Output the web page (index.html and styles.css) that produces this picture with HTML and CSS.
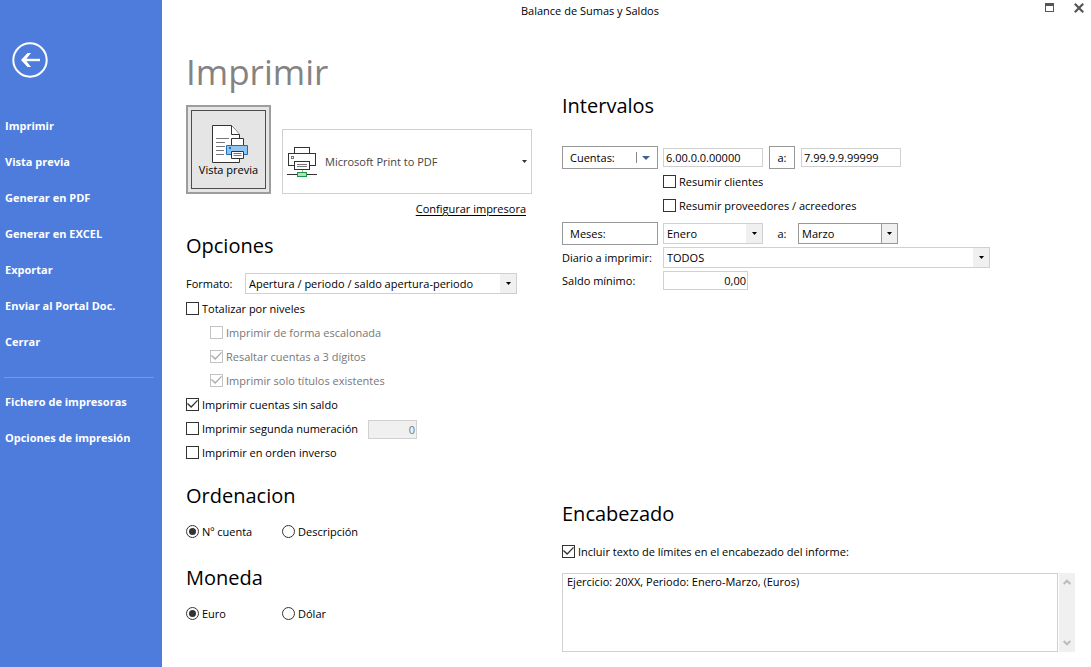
FILE: index.html
```html
<!DOCTYPE html>
<html lang="es">
<head>
<meta charset="utf-8">
<meta name="viewport" content="width=device-width, initial-scale=1">
<title>Balance de Sumas y Saldos</title>
<link rel="stylesheet" href="styles.css">
</head>
<body>
<nav class="sidebar">
  <button class="back" type="button" aria-label="Volver">
    <svg width="36" height="36" viewBox="0 0 36 36" fill="none" stroke="#fff">
      <circle cx="18" cy="18" r="16.7" stroke-width="2"/>
      <path d="M11 18h17" stroke-width="2.4"/>
      <path d="M9 18l6.5-7h3.5l-5.5 7 5.500 7h-3.500z" fill="#fff" stroke="none"/>
    </svg>
  </button>
  <ul class="menu">
    <li><a href="#">Imprimir</a></li>
    <li><a href="#">Vista previa</a></li>
    <li><a href="#">Generar en PDF</a></li>
    <li><a href="#">Generar en EXCEL</a></li>
    <li><a href="#">Exportar</a></li>
    <li><a href="#">Enviar al Portal Doc.</a></li>
    <li><a href="#">Cerrar</a></li>
  </ul>
  <hr class="divider">
  <ul class="menu">
    <li><a href="#">Fichero de impresoras</a></li>
    <li><a href="#">Opciones de impresión</a></li>
  </ul>
</nav>

<div class="window">
  <header class="titlebar">
    <span class="caption">Balance de Sumas y Saldos</span>
    <div class="controls">
      <button type="button" aria-label="Maximizar">
        <svg width="9" height="9" viewBox="0 0 9 9" shape-rendering="crispEdges"><path d="M.5.5h8v8h-8z" fill="none" stroke="#555"/><path d="M0 0h9v3H0z" fill="#555"/></svg>
      </button>
      <button type="button" aria-label="Cerrar ventana">
        <svg width="10" height="10" viewBox="0 0 10 10"><path d="M.8.8l8.400 8.400M9.200.8L.8 9.200" stroke="#555" stroke-width="2.200"/></svg>
      </button>
    </div>
  </header>

  <main class="content">
    <div class="column">
      <h1>Imprimir</h1>
      <div class="output">
        <button class="preview" type="button">
          <span class="preview-face">
            <svg width="37" height="38" viewBox="0 0 37 38" fill="#fff" stroke="#333">
              <path d="M.5.5h19l8 9v28H.5z"/>
              <path d="M19.500.5v9h8"/>
              <path d="M4 13.500h13M4 17.500h9M4 21.500h9M4 25.500h8M4 29.500h8" stroke="#777"/>
              <path d="M19.500 13.500h12v7h-12z"/>
              <path d="M14.500 20.500h21v9h-21z" fill="#92c5ee" stroke="#1c6dbb"/>
              <path d="M17 22h2v2h-2z" fill="#1c6dbb" stroke="none"/>
              <path d="M19.500 26.500h12v7h-12z"/>
              <path d="M21.500 28.500h8M21.500 30.500h8" stroke="#777"/>
            </svg>
            <span class="preview-label">Vista previa</span>
          </span>
        </button>
        <button class="printer" type="button">
          <svg width="30" height="30" viewBox="0 0 30 30" fill="#fff" stroke="#333" shape-rendering="crispEdges">
            <path d="M7.500.5h15v6h-15zM1.500 6.500h27v12h-27z"/>
            <path d="M4.500 9.500h2v2h-2z" stroke="#777"/>
            <path d="M7.500 14.500h15v8h-15z"/>
            <path d="M10 17.500h10M10 19.500h10" stroke="#777"/>
            <path d="M15.500 23v2" stroke="#aaa"/>
            <path d="M0 27.500h30"/>
            <path d="M10.500 25.500h9v4h-9z" fill="#b9dcb9" stroke="#149a45"/>
          </svg>
          <span class="printer-name">Microsoft Print to PDF</span>
          <svg class="arrow" width="5" height="3" viewBox="0 0 5 3"><path d="M0 0h5L2.500 3z"/></svg>
        </button>
      </div>
      <a class="configure" href="#">Configurar impresora</a>

      <h2 class="options-title">Opciones</h2>
      <div class="format">
        <label for="formato">Formato:</label>
        <div class="combo">
          <select id="formato"><option>Apertura / periodo / saldo apertura-periodo</option></select>
          <span class="combo-button"><svg width="5" height="3" viewBox="0 0 5 3"><path d="M0 0h5L2.500 3z"/></svg></span>
        </div>
      </div>
      <div class="checks">
        <label class="choice"><input type="checkbox">Totalizar por niveles</label>
        <label class="choice nested"><input type="checkbox" disabled>Imprimir de forma escalonada</label>
        <label class="choice nested"><input type="checkbox" checked disabled>Resaltar cuentas a 3 dígitos</label>
        <label class="choice nested"><input type="checkbox" checked disabled>Imprimir solo títulos existentes</label>
        <label class="choice"><input type="checkbox" checked>Imprimir cuentas sin saldo</label>
        <div class="numbering">
          <label class="choice"><input type="checkbox">Imprimir segunda numeración</label>
          <input class="field number small" type="text" value="0" disabled aria-label="Segunda numeración">
        </div>
        <label class="choice"><input type="checkbox">Imprimir en orden inverso</label>
      </div>

      <h2 class="group-title">Ordenacion</h2>
      <div class="radios">
        <label class="choice"><input type="radio" name="orden" checked>Nº cuenta</label>
        <label class="choice"><input type="radio" name="orden">Descripción</label>
      </div>

      <h2 class="group-title last">Moneda</h2>
      <div class="radios">
        <label class="choice"><input type="radio" name="moneda" checked>Euro</label>
        <label class="choice"><input type="radio" name="moneda">Dólar</label>
      </div>
    </div>

    <div class="column">
      <h2 class="ranges-title">Intervalos</h2>
      <div class="range">
        <button class="range-button split" type="button">Cuentas:
          <svg width="14" height="11" viewBox="0 0 14 11"><path d="M.5 0v11" stroke="#888"/><path d="M6 4h8l-4 4z" fill="#44618c"/></svg>
        </button>
        <input class="field" type="text" value="6.00.0.0.00000" aria-label="Cuenta inicial">
        <button class="to" type="button">a:</button>
        <input class="field" type="text" value="7.99.9.9.99999" aria-label="Cuenta final">
      </div>
      <div class="summaries">
        <label class="choice"><input type="checkbox">Resumir clientes</label>
        <label class="choice"><input type="checkbox">Resumir proveedores / acreedores</label>
      </div>
      <div class="range months">
        <button class="range-button" type="button">Meses:</button>
        <div class="combo">
          <select aria-label="Mes inicial"><option>Enero</option></select>
          <span class="combo-button"><svg width="5" height="3" viewBox="0 0 5 3"><path d="M0 0h5L2.500 3z"/></svg></span>
        </div>
        <span class="to-text">a:</span>
        <div class="combo active">
          <select aria-label="Mes final"><option>Marzo</option></select>
          <span class="combo-button"><svg width="5" height="3" viewBox="0 0 5 3"><path d="M0 0h5L2.500 3z"/></svg></span>
        </div>
      </div>
      <div class="details">
        <label for="diario">Diario a imprimir:</label>
        <div class="combo journal">
          <select id="diario"><option>TODOS</option></select>
          <span class="combo-button"><svg width="5" height="3" viewBox="0 0 5 3"><path d="M0 0h5L2.500 3z"/></svg></span>
        </div>
        <label for="saldo">Saldo mínimo:</label>
        <input class="field number amount" id="saldo" type="text" value="0,00">
      </div>

      <section class="heading-text">
        <h2>Encabezado</h2>
        <label class="choice include"><input type="checkbox" checked>Incluir texto de límites en el encabezado del informe:</label>
        <div class="memo">
          <textarea aria-label="Texto del encabezado">Ejercicio: 20XX, Periodo: Enero-Marzo, (Euros)</textarea>
          <div class="scroll">
            <svg width="8" height="6" viewBox="0 0 8 6" fill="none" stroke="#bbb" stroke-width="2"><path d="M.7 5L4 1.700 7.300 5"/></svg>
            <svg width="8" height="6" viewBox="0 0 8 6" fill="none" stroke="#bbb" stroke-width="2"><path d="M.7 1L4 4.300 7.300 1"/></svg>
          </div>
        </div>
      </section>
    </div>
  </main>
</div>
</body>
</html>
```

FILE: styles.css
```css
* { box-sizing: border-box; }

body {
  margin: 0;
  display: flex;
  min-height: 100vh;
  background: #fff;
  color: #000;
  font: 11px/16px "Open Sans", "Noto Sans", sans-serif;
}

button, input, select, textarea {
  font: inherit;
  color: inherit;
  margin: 0;
  border-radius: 0;
}

button { padding: 0; border: 0; background: none; }

h1 {
  margin: 26px 0 9px;
  font-size: 35px;
  line-height: 48px;
  font-weight: 400;
  color: #838383;
}

h2 {
  margin: 0;
  font-size: 20px;
  line-height: 28px;
  font-weight: 400;
}

/* Sidebar */
.sidebar {
  flex: 0 0 162px;
  background: #4d7cdc;
  color: #fff;
  padding: 42px 8px 0 4px;
}

.back { display: block; width: 36px; height: 36px; margin: 0 0 30px 8px; }
.back svg { display: block; }

.menu { list-style: none; margin: 0; padding: 0; }

.menu a {
  display: block;
  padding: 0 1px;
  line-height: 36px;
  font-weight: 700;
  color: inherit;
  text-decoration: none;
}

.divider { margin: 17px 0 6px; border: 0; border-top: 1px solid #7299ee; }

/* Window */
.window { flex: 1; display: flex; flex-direction: column; min-width: 0; }

.titlebar { display: flex; height: 22px; }
.caption { flex: 1; text-align: center; line-height: 22px; }

.controls {
  display: flex;
  justify-content: flex-end;
  align-items: flex-start;
  gap: 20px;
  width: 73px;
  padding: 3px 7px 0 0;
}

.controls svg { display: block; }

.content {
  flex: 1;
  display: grid;
  grid-template-columns: 346px 1fr;
  column-gap: 30px;
  padding: 0 16px 15px 24px;
}

.column { display: flex; flex-direction: column; min-width: 0; }

/* Printer */
.output { display: flex; align-items: flex-end; gap: 11px; }

.preview {
  width: 85px;
  height: 89px;
  padding: 3px;
  border: 2px solid #9d9d9d;
  background: #e5e5e5;
}

.preview-face {
  display: flex;
  flex-direction: column;
  height: 100%;
  padding: 14px 0 0 20px;
  border: 1px solid #4d4d4d;
}

.preview-label { margin: -1px 0 0 -20px; text-align: center; }

.printer {
  flex: 1;
  display: flex;
  align-items: center;
  gap: 8px;
  height: 65px;
  padding: 0 4px;
  border: 1px solid #d0d0d0;
  color: #444;
}

.printer-name { flex: 1; text-align: left; }
.arrow { fill: #333; }

.configure {
  align-self: flex-end;
  margin: 7px 6px 15px 0;
  color: inherit;
  text-underline-offset: 2px;
}

/* Fields */
.field {
  width: 100px;
  height: 19px;
  padding: 0 2px;
  border: 1px solid #d0d0d0;
  background: #fff;
}

.number { text-align: right; padding: 0 1px; }
.small { width: 49px; }
.amount { width: 85px; }
.field:disabled { background: #f0f0f0; color: #777; }

.combo { display: grid; width: 100px; height: 21px; }

.combo select {
  grid-area: 1 / 1;
  width: 100%;
  padding: 0 20px 0 3px;
  border: 1px solid #d0d0d0;
  background: #fff;
  appearance: none;
}

.combo-button {
  grid-area: 1 / 1;
  justify-self: end;
  display: flex;
  align-items: center;
  justify-content: center;
  width: 16px;
  margin: 1px;
  background: #f0f0f0;
  pointer-events: none;
}

.active select { border-color: #999; }
.active .combo-button { border-left: 1px solid #999; }

/* Checkboxes and radio buttons */
.choice {
  display: flex;
  align-items: center;
  gap: 3px;
  height: 24px;
  white-space: nowrap;
}

.choice input {
  flex: none;
  display: grid;
  place-content: center;
  width: 13px;
  height: 13px;
  margin-bottom: 2px;
  border: 1px solid #333;
  background: #fff;
  appearance: none;
}

.choice input[type="checkbox"]:checked::before {
  content: "";
  width: 11px;
  height: 8px;
  background: #333;
  clip-path: polygon(0 50%, 8% 38%, 38% 75%, 92% 0, 100% 10%, 38% 100%);
}

.choice input[type="radio"] { border-radius: 50%; }

.choice input[type="radio"]:checked::before {
  content: "";
  width: 7px;
  height: 7px;
  border-radius: 50%;
  background: #333;
}

.choice:has(input:disabled) { color: #777; }
.choice input:disabled { border-color: #c4c4c4; }
.choice input[type="checkbox"]:disabled::before { background: #aaa; }
.nested { padding-left: 24px; }

/* Left column groups */
.format { display: flex; align-items: center; margin: 13px 15px 3px 0; }
.format label { flex: 0 0 59px; }
.format .combo { flex: 1; }

.numbering { display: flex; align-items: center; gap: 10px; }
.numbering .choice { flex: 0 0 170px; }

.group-title { margin: 17px 0 10px; }
.group-title.last { margin-top: 20px; }

.radios { display: grid; grid-template-columns: 96px 1fr; }

/* Right column */
.ranges-title { margin: 70px 0 26px; }

.range { display: flex; align-items: center; height: 23px; }

.range-button {
  width: 96px;
  height: 23px;
  margin-right: 5px;
  padding: 0 7px;
  border: 1px solid #999;
  text-align: left;
}

.split { display: flex; align-items: center; justify-content: space-between; }

.to { width: 26px; height: 23px; margin: 0 6px; border: 1px solid #999; }
.to-text { width: 35px; padding-left: 3px; text-align: center; }

.summaries { margin: 1px 0 4px 101px; }

.months { margin-bottom: 2px; }

.details {
  display: grid;
  grid-template-columns: 96px 1fr;
  gap: 3px 5px;
  align-items: center;
}

.details label { white-space: nowrap; }
.journal { width: auto; margin-right: 85px; }

.heading-text { margin-top: auto; }
.include { margin: 12px 0 9px; }

.memo { display: flex; gap: 1px; height: 79px; }

.memo textarea {
  flex: 1;
  padding: 0 4px;
  border: 1px solid #d0d0d0;
  resize: none;
  overflow: hidden;
}

.scroll {
  display: flex;
  flex-direction: column;
  justify-content: space-between;
  align-items: center;
  width: 16px;
  padding: 6px 0;
  background: #f0f0f0;
}
```
